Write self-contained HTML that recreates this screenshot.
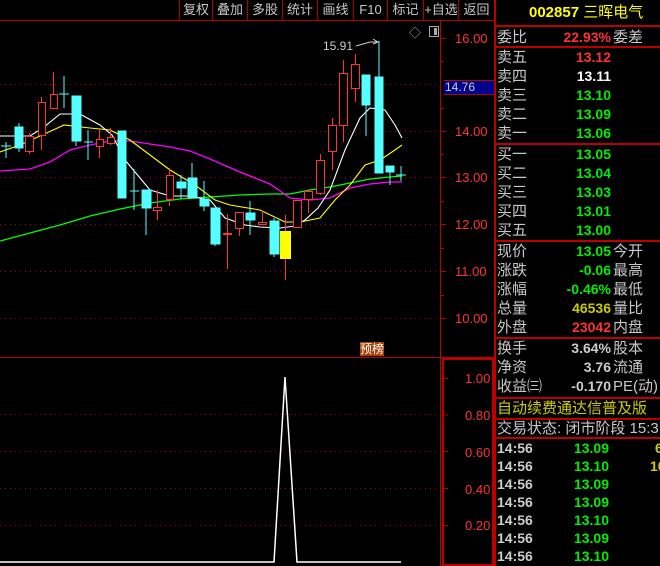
<!DOCTYPE html>
<html><head><meta charset="utf-8"><style>
*{margin:0;padding:0;box-sizing:border-box}
body{width:660px;height:566px;background:#000;overflow:hidden;position:relative;font-family:"Liberation Sans","Noto Sans CJK SC",sans-serif;}
.a{position:absolute;white-space:nowrap;line-height:1}
.tb{position:absolute;top:0;height:20px;font-size:13px;color:#c8c8c8;line-height:20px;text-align:center;border-left:1px solid #a00}
.hl{position:absolute;left:494px;width:166px;height:2px;background:#b00}
.r{position:absolute;font-size:15px;line-height:19px;color:#c8c8c8;white-space:nowrap}
.v{position:absolute;font-size:14px;font-weight:bold;line-height:19px;text-align:right;white-space:nowrap}
.ax{position:absolute;font-size:13px;color:#f33;left:455px;line-height:1}
</style></head><body>
<div class="tb" style="left:179px;width:33px">复权</div>
<div class="tb" style="left:212px;width:35px">叠加</div>
<div class="tb" style="left:247px;width:35px">多股</div>
<div class="tb" style="left:282px;width:35px">统计</div>
<div class="tb" style="left:317px;width:36px">画线</div>
<div class="tb" style="left:353px;width:34px">F10</div>
<div class="tb" style="left:387px;width:36px">标记</div>
<div class="tb" style="left:423px;width:35px">+自选</div>
<div class="tb" style="left:458px;width:36px">返回</div>
<div class="a" style="left:0;top:20px;width:494px;height:1px;background:#b00"></div>
<svg class="a" style="left:0;top:0" width="494" height="566">
<g stroke="#a00" stroke-dasharray="1,4" stroke-width="1">
<line x1="0" y1="84.5" x2="440" y2="84.5"/><line x1="0" y1="131.5" x2="440" y2="131.5"/><line x1="0" y1="177.5" x2="440" y2="177.5"/><line x1="0" y1="224.5" x2="440" y2="224.5"/><line x1="0" y1="271.5" x2="440" y2="271.5"/><line x1="0" y1="318.5" x2="440" y2="318.5"/>
<line x1="0" y1="414.5" x2="440" y2="414.5"/><line x1="0" y1="451.5" x2="440" y2="451.5"/><line x1="0" y1="488.5" x2="440" y2="488.5"/><line x1="0" y1="525.5" x2="440" y2="525.5"/>
</g>
<line x1="440.5" y1="20" x2="440.5" y2="566" stroke="#b00"/>
<line x1="0" y1="357.5" x2="494" y2="357.5" stroke="#b00"/>
<rect x="443" y="359" width="50" height="206" fill="none" stroke="#b00" stroke-width="2"/>
<g stroke="#b00"><line x1="440" y1="38.5" x2="446" y2="38.5"/><line x1="440" y1="61.5" x2="444" y2="61.5"/><line x1="440" y1="108.5" x2="444" y2="108.5"/><line x1="440" y1="131.5" x2="446" y2="131.5"/><line x1="440" y1="154.5" x2="444" y2="154.5"/><line x1="440" y1="177.5" x2="446" y2="177.5"/><line x1="440" y1="201.5" x2="444" y2="201.5"/><line x1="440" y1="224.5" x2="446" y2="224.5"/><line x1="440" y1="248.5" x2="444" y2="248.5"/><line x1="440" y1="271.5" x2="446" y2="271.5"/><line x1="440" y1="295.5" x2="444" y2="295.5"/><line x1="440" y1="318.5" x2="446" y2="318.5"/></g>
<!-- MAs -->
<polyline fill="none" stroke="#0f0" stroke-width="1.3" points="0,241 30,233 60,225 90,216 120,209 150,203 180,199 210,197 240,195 270,194 290,194 310,190 330,187 350,183 370,179 390,177 402,176"/>
<polyline fill="none" stroke="#f0f" stroke-width="1.3" points="0,171 30,169 50,162 70,150 90,145 110,141 130,141 150,144 170,147 190,151 210,159 240,172 270,184 290,198 310,200 330,198 350,188 370,184 390,182 402,182"/>
<polyline fill="none" stroke="#ff0" stroke-width="1.1" points="0,152 20,145 40,136 64,125 90,128 110,130 130,140 150,155 170,170 195,185 215,200 230,205 260,210 285,222 300,222 320,218 335,200 350,185 365,165 380,160 392,152 402,145"/>
<polyline fill="none" stroke="#fff" stroke-width="1.1" points="0,136 30,136 44,127 60,114 80,114 100,125 112,135 125,160 150,190 170,196 190,196 210,200 225,218 245,225 260,227 280,228 295,226 305,220 318,208 330,190 345,150 360,118 370,108 385,110 395,125 402,138"/>
<!-- cyan candles -->
<g stroke="#5ff" fill="#5ff">
<line x1="6" y1="142" x2="6" y2="158"/><line x1="1" y1="146" x2="11" y2="146"/>
<line x1="19" y1="123" x2="19" y2="152"/><rect x="15" y="127" width="8" height="21"/>
<line x1="64" y1="76" x2="64" y2="108"/><line x1="59" y1="94" x2="69" y2="94"/>
<line x1="76" y1="96" x2="76" y2="146"/><rect x="72" y="96" width="9" height="45"/>
<line x1="88" y1="130" x2="88" y2="160"/><line x1="84" y1="142" x2="93" y2="142"/>
<rect x="118" y="131" width="8" height="67"/>
<line x1="134" y1="169" x2="134" y2="210"/><line x1="130" y1="191" x2="139" y2="191"/>
<line x1="146" y1="190" x2="146" y2="235"/><rect x="142" y="190" width="9" height="18"/>
<line x1="181" y1="175" x2="181" y2="199"/><rect x="177" y="182" width="9" height="6"/>
<line x1="192" y1="163" x2="192" y2="198"/><rect x="188" y="178" width="9" height="20"/>
<line x1="204" y1="181" x2="204" y2="211"/><rect x="200" y="199" width="9" height="7"/>
<line x1="215" y1="208" x2="215" y2="246"/><rect x="211" y="208" width="9" height="36"/>
<line x1="250" y1="201" x2="250" y2="235"/><rect x="246" y="213" width="9" height="7"/>
<line x1="274" y1="218" x2="274" y2="257"/><rect x="270" y="221" width="9" height="33"/>
<line x1="366" y1="75" x2="366" y2="136"/><rect x="362" y="75" width="8" height="30"/>
<line x1="379" y1="41" x2="379" y2="173"/><rect x="375" y="77" width="8" height="96"/>
<line x1="390" y1="166" x2="390" y2="185"/><rect x="386" y="166" width="8" height="6"/>
<line x1="401" y1="166" x2="401" y2="181"/><line x1="396" y1="175" x2="406" y2="175"/>
</g>
<!-- red candles -->
<g stroke="#f33" fill="none">
<line x1="29.5" y1="133" x2="29.5" y2="154"/><rect x="25.5" y="136.5" width="8" height="15" fill="#000"/>
<line x1="41.5" y1="97" x2="41.5" y2="150"/><rect x="38.5" y="102.5" width="7" height="33" fill="#000"/>
<line x1="53.5" y1="72" x2="53.5" y2="108"/><rect x="50.5" y="94.5" width="7" height="14" fill="#000"/>
<line x1="99.5" y1="130" x2="99.5" y2="158"/><rect x="96.5" y="139.5" width="7" height="7" fill="#000"/>
<line x1="110.5" y1="128" x2="110.5" y2="145"/><rect x="107.5" y="137.5" width="7" height="6" fill="#000"/>
<line x1="157.5" y1="190" x2="157.5" y2="220"/><rect x="153.5" y="207.5" width="8" height="3" fill="#000"/>
<line x1="169.5" y1="168" x2="169.5" y2="206"/><rect x="166.5" y="175.5" width="7" height="24" fill="#000"/>
<line x1="227.5" y1="214" x2="227.5" y2="269"/><line x1="223" y1="234" x2="232" y2="234" stroke-width="2"/>
<line x1="239.5" y1="212" x2="239.5" y2="236"/><rect x="235.5" y="212.5" width="8" height="16" fill="#000"/>
<line x1="262.5" y1="211" x2="262.5" y2="225"/><rect x="258.5" y="222.5" width="8" height="2" fill="#000"/>
<line x1="285.5" y1="215" x2="285.5" y2="280"/>
<rect x="293.5" y="200.5" width="8" height="27" fill="#000"/>
<line x1="308.5" y1="189" x2="308.5" y2="213"/><rect x="304.5" y="191.5" width="8" height="8" fill="#000"/>
<line x1="320.5" y1="154" x2="320.5" y2="195"/><rect x="316.5" y="160.5" width="8" height="33" fill="#000"/>
<line x1="332.5" y1="118" x2="332.5" y2="170"/><rect x="328.5" y="125.5" width="8" height="26" fill="#000"/>
<line x1="343.5" y1="60" x2="343.5" y2="142"/><rect x="339.5" y="73.5" width="8" height="52" fill="#000"/>
<line x1="355.5" y1="54" x2="355.5" y2="102"/><rect x="351.5" y="64.5" width="8" height="24" fill="#000"/>
</g>
<rect x="280" y="231" width="11" height="28" fill="#ff0"/>
<text x="323" y="50" fill="#ccc" font-size="12" font-family="Liberation Sans">15.91</text>
<polyline points="356,46 370,42 378,42" fill="none" stroke="#ccc"/>
<polyline points="373,39 378,42 373,44" fill="none" stroke="#ccc"/>
<text x="409" y="37" fill="#aaa" font-size="12">◇</text>
<rect x="429.5" y="26.5" width="9" height="10" fill="none" stroke="#aaa"/><rect x="434" y="28" width="3" height="7" fill="#aaa"/>
<!-- sub chart -->
<polyline points="0,562 274,562 285,377 297,562 401,562" fill="none" stroke="#fff" stroke-width="1.5"/>
<g stroke="#b00"><line x1="443" y1="378.5" x2="448" y2="378.5"/><line x1="443" y1="415" x2="448" y2="415"/><line x1="443" y1="451.5" x2="448" y2="451.5"/><line x1="443" y1="488.5" x2="448" y2="488.5"/><line x1="443" y1="525.5" x2="448" y2="525.5"/></g>
</svg>
<div class="a" style="left:360px;top:342px;width:24px;height:14px;background:#a84008;color:#fff;font-size:12px;line-height:14px;text-align:center">预榜</div>
<div class="ax" style="top:32px">16.00</div>
<div class="ax" style="top:125px">14.00</div>
<div class="ax" style="top:171px">13.00</div>
<div class="ax" style="top:218px">12.00</div>
<div class="ax" style="top:265px">11.00</div>
<div class="ax" style="top:312px">10.00</div>
<div class="a" style="left:444px;top:80px;width:50px;height:15px;background:#00008c;border-top:1px solid #b00;border-bottom:1px solid #b00;color:#ccc;font-size:12px;line-height:13px;padding-left:1px">14.76</div>
<div class="ax" style="top:372px;left:465px">1.00</div>
<div class="ax" style="top:409px;left:465px">0.80</div>
<div class="ax" style="top:446px;left:465px">0.60</div>
<div class="ax" style="top:483px;left:465px">0.40</div>
<div class="ax" style="top:519px;left:465px">0.20</div>
<!-- right panel -->
<div class="a" style="left:494px;top:0;width:2px;height:566px;background:#b00"></div>
<div class="a" style="left:529px;top:5px;font-size:15px;color:#ff0;font-weight:bold">002857 <span style="font-weight:normal">三晖电气</span></div>
<div class="hl" style="top:25px"></div>
<div class="r" style="left:497px;top:28px">委比</div><div class="v" style="left:540px;top:28px;width:71px;color:#f33">22.93%</div><div class="r" style="left:613px;top:28px">委差</div>
<div class="hl" style="top:46px"></div>
<div class="r" style="left:497px;top:48px">卖五</div><div class="v" style="left:560px;top:48px;width:51px;color:#f33">13.12</div>
<div class="r" style="left:497px;top:67px">卖四</div><div class="v" style="left:560px;top:67px;width:51px;color:#fff">13.11</div>
<div class="r" style="left:497px;top:86px">卖三</div><div class="v" style="left:560px;top:86px;width:51px;color:#0e0">13.10</div>
<div class="r" style="left:497px;top:105px">卖二</div><div class="v" style="left:560px;top:105px;width:51px;color:#0e0">13.09</div>
<div class="r" style="left:497px;top:124px">卖一</div><div class="v" style="left:560px;top:124px;width:51px;color:#0e0">13.06</div>
<div class="hl" style="top:143px"></div>
<div class="r" style="left:497px;top:145px">买一</div><div class="v" style="left:560px;top:145px;width:51px;color:#0e0">13.05</div>
<div class="r" style="left:497px;top:164px">买二</div><div class="v" style="left:560px;top:164px;width:51px;color:#0e0">13.04</div>
<div class="r" style="left:497px;top:183px">买三</div><div class="v" style="left:560px;top:183px;width:51px;color:#0e0">13.03</div>
<div class="r" style="left:497px;top:202px">买四</div><div class="v" style="left:560px;top:202px;width:51px;color:#0e0">13.01</div>
<div class="r" style="left:497px;top:221px">买五</div><div class="v" style="left:560px;top:221px;width:51px;color:#0e0">13.00</div>
<div class="hl" style="top:240px"></div>
<div class="r" style="left:497px;top:242px">现价</div><div class="v" style="left:540px;top:242px;width:71px;color:#0e0">13.05</div><div class="r" style="left:613px;top:242px">今开</div>
<div class="r" style="left:497px;top:261px">涨跌</div><div class="v" style="left:540px;top:261px;width:71px;color:#0e0">-0.06</div><div class="r" style="left:613px;top:261px">最高</div>
<div class="r" style="left:497px;top:280px">涨幅</div><div class="v" style="left:540px;top:280px;width:71px;color:#0e0">-0.46%</div><div class="r" style="left:613px;top:280px">最低</div>
<div class="r" style="left:497px;top:299px">总量</div><div class="v" style="left:540px;top:299px;width:71px;color:#cc0">46536</div><div class="r" style="left:613px;top:299px">量比</div>
<div class="r" style="left:497px;top:318px">外盘</div><div class="v" style="left:540px;top:318px;width:71px;color:#f33">23042</div><div class="r" style="left:613px;top:318px">内盘</div>
<div class="hl" style="top:337px"></div>
<div class="r" style="left:497px;top:339px">换手</div><div class="v" style="left:540px;top:339px;width:71px;color:#ccc">3.64%</div><div class="r" style="left:613px;top:339px">股本</div>
<div class="r" style="left:497px;top:358px">净资</div><div class="v" style="left:540px;top:358px;width:71px;color:#ccc">3.76</div><div class="r" style="left:613px;top:358px">流通</div>
<div class="r" style="left:497px;top:377px">收益㈢</div><div class="v" style="left:540px;top:377px;width:71px;color:#ccc">-0.170</div><div class="r" style="left:613px;top:377px">PE(动)</div>
<div class="hl" style="top:397px"></div>
<div class="r" style="left:497px;top:399px;color:#cc0">自动续费通达信普及版</div>
<div class="hl" style="top:418px"></div>
<div class="r" style="left:497px;top:419px">交易状态: 闭市阶段 15:3</div>
<div class="hl" style="top:437px"></div>
<div class="v" style="left:497px;top:439px;color:#ccc">14:56</div><div class="v" style="left:560px;top:439px;width:49px;color:#0e0">13.09</div><div class="v" style="left:655px;top:439px;color:#cc0">6</div>
<div class="v" style="left:497px;top:457px;color:#ccc">14:56</div><div class="v" style="left:560px;top:457px;width:49px;color:#0e0">13.10</div><div class="v" style="left:650px;top:457px;color:#cc0">10</div>
<div class="v" style="left:497px;top:475px;color:#ccc">14:56</div><div class="v" style="left:560px;top:475px;width:49px;color:#0e0">13.09</div>
<div class="v" style="left:497px;top:493px;color:#ccc">14:56</div><div class="v" style="left:560px;top:493px;width:49px;color:#0e0">13.09</div>
<div class="v" style="left:497px;top:511px;color:#ccc">14:56</div><div class="v" style="left:560px;top:511px;width:49px;color:#0e0">13.10</div>
<div class="v" style="left:497px;top:529px;color:#ccc">14:56</div><div class="v" style="left:560px;top:529px;width:49px;color:#0e0">13.09</div>
<div class="v" style="left:497px;top:547px;color:#ccc">14:56</div><div class="v" style="left:560px;top:547px;width:49px;color:#0e0">13.10</div>
</body></html>
